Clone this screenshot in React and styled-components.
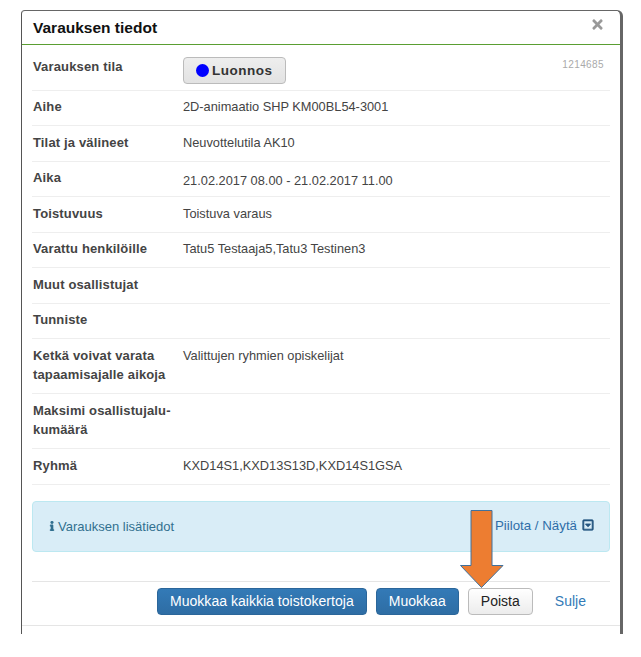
import React from 'react';
import styled, { createGlobalStyle } from 'styled-components';
import { FaInfo, FaTimes, FaRegCaretSquareDown } from 'react-icons/fa';

const GlobalStyle = createGlobalStyle`
  body {
    margin: 0;
    background: #fff;
    font-family: "Liberation Sans", Arial, sans-serif;
    font-size: 13px;
    color: #333;
  }
`;

const Page = styled.div`
  width: 641px;
  height: 657px;
  padding: 10px 0 0 21px;
  box-sizing: border-box;
`;

const Modal = styled.div`
  position: relative;
  width: 602px;
  height: 624px;
  box-sizing: border-box;
  border-top: 1px solid #666;
  border-left: 1px solid #555;
  border-right: 3px solid #666;
  border-radius: 4px 6px 0 0;
  display: flex;
  flex-direction: column;
`;

const Header = styled.div`
  height: 33px;
  flex: none;
  border-bottom: 1px solid #5a9e32;
  padding: 0 15px 0 11px;
  display: flex;
  justify-content: space-between;
  align-items: center;
`;

const Title = styled.h4`
  margin: 0;
  font-size: 15.5px;
  font-weight: bold;
  color: #111;
`;

const CloseButton = styled.span`
  color: #999;
  font-size: 15px;
  display: flex;
  margin: -6px 0 0;
`;

const Body = styled.div`
  padding: 0 10px;
  flex: none;
`;

const Row = styled.div`
  display: grid;
  grid-template-columns: 150px 1fr auto;
  box-sizing: border-box;
  height: ${({ $height }) => $height}px;
  padding: ${({ $top }) => $top || 6.6}px 6px 0 1px;
  border-bottom: 1px solid #eee;
  line-height: 19px;
`;

const Label = styled.div`
  font-weight: bold;
  font-size: 13px;
  letter-spacing: 0.15px;
  color: #444;
`;

const Value = styled.div`
  color: #444;
  font-size: 12.8px;
  padding-top: ${({ $shift }) => $shift || 0}px;
`;

const StatusButton = styled.div`
  width: 103px;
  height: 27px;
  box-sizing: border-box;
  border: 1px solid #bbb;
  border-radius: 4px;
  background: linear-gradient(#eee, #e2e2e2);
  display: flex;
  align-items: center;
  padding-left: 12px;
  gap: 3px;
  font-size: 13.5px;
  font-weight: bold;
  color: #333;
  letter-spacing: 0.5px;
`;

const Dot = styled.span`
  width: 13px;
  height: 13px;
  border-radius: 50%;
  background: #0000ff;
`;

const ReservationId = styled.div`
  font-size: 10px;
  color: #aaa;
  letter-spacing: 0.4px;
  margin-top: -2px;
`;

const InfoBox = styled.div`
  margin-top: 16.4px;
  height: 51px;
  box-sizing: border-box;
  background: #d9edf7;
  border: 1px solid #bce8f1;
  border-radius: 4px;
  padding: 0 15px;
  display: flex;
  justify-content: space-between;
  align-items: center;
  color: #31708f;
`;

const InfoText = styled.span`
  display: flex;
  align-items: center;
  svg {
    margin-left: -1px;
    stroke: currentColor;
    stroke-width: 20px;
  }
  span {
    margin-left: 1px;
  }
`;

const ToggleLink = styled.span`
  display: flex;
  align-items: center;
  gap: 5px;
  font-size: 13.3px;
  color: #2f6ea8;
  margin-top: -2px;
  svg {
    color: #245580;
    stroke: #245580;
    stroke-width: 30px;
  }
`;

const Footer = styled.div`
  margin: 29px 10px 0;
  height: 44px;
  box-sizing: border-box;
  border-top: 1px solid #e5e5e5;
  padding: 6px 12px 0 0;
  display: flex;
  justify-content: flex-end;
  gap: 9px;
`;

const Button = styled.div`
  height: 27px;
  box-sizing: border-box;
  padding: 0 12px;
  border-radius: 4px;
  border: 1px solid ${({ $primary }) => ($primary ? '#2b669a' : '#bbb')};
  background: ${({ $primary }) => ($primary
    ? 'linear-gradient(#337ab7, #2e6da4)'
    : 'linear-gradient(#fff, #ececec)')};
  color: ${({ $primary }) => ($primary ? '#fff' : '#222')};
  display: flex;
  align-items: center;
  font-size: 14px;
  letter-spacing: 0.03px;
`;

const LinkButton = styled.div`
  height: 27px;
  padding: 0 12px 0 13px;
  display: flex;
  align-items: center;
  font-size: 14px;
  color: #337ab7;
`;

const BottomLine = styled.div`
  border-top: 1px solid #e5e5e5;
`;

const Arrow = styled.svg`
  position: absolute;
  left: 438px;
  top: 498px;
`;

const rows = [
  { label: 'Aihe', value: '2D-animaatio SHP KM00BL54-3001', height: 35.5 },
  { label: 'Tilat ja välineet', value: 'Neuvottelutila AK10', height: 35.5 },
  { label: 'Aika', value: '21.02.2017 08.00 - 21.02.2017 11.00', height: 35.5, shift: 3 },
  { label: 'Toistuvuus', value: 'Toistuva varaus', height: 35.5 },
  { label: 'Varattu henkilöille', value: 'Tatu5 Testaaja5,Tatu3 Testinen3', height: 35.5 },
  { label: 'Muut osallistujat', height: 35.5 },
  { label: 'Tunniste', height: 35.5 },
  { label: 'Ketkä voivat varata tapaamisajalle aikoja', value: 'Valittujen ryhmien opiskelijat', height: 55 },
  { label: 'Maksimi osallistujalu-kumäärä', height: 55 },
  { label: 'Ryhmä', value: 'KXD14S1,KXD13S13D,KXD14S1GSA', height: 35.5 },
];

const App = () => (
  <Page>
    <GlobalStyle />
    <Modal>
      <Header>
        <Title>Varauksen tiedot</Title>
        <CloseButton><FaTimes /></CloseButton>
      </Header>
      <Body>
        <Row $height={45.6} $top={12}>
          <Label>Varauksen tila</Label>
          <StatusButton><Dot />Luonnos</StatusButton>
          <ReservationId>1214685</ReservationId>
        </Row>
        {rows.map(row => (
          <Row key={row.label} $height={row.height}>
            <Label>{row.label}</Label>
            <Value $shift={row.shift}>{row.value}</Value>
          </Row>
        ))}
        <InfoBox>
          <InfoText><FaInfo size={10} /><span>Varauksen lisätiedot</span></InfoText>
          <ToggleLink>Piilota / Näytä <FaRegCaretSquareDown size={12} /></ToggleLink>
        </InfoBox>
      </Body>
      <Footer>
        <Button $primary>Muokkaa kaikkia toistokertoja</Button>
        <Button $primary>Muokkaa</Button>
        <Button>Poista</Button>
        <LinkButton>Sulje</LinkButton>
      </Footer>
      <BottomLine />
      <Arrow width="44" height="80" viewBox="0 0 44 80">
        <path
          d="M11 1.5 H32 V56.5 H43 L21.5 78.5 L0.5 56.5 H11 Z"
          fill="#ed7d31"
          stroke="#41719c"
          strokeWidth="1"
        />
      </Arrow>
    </Modal>
  </Page>
);

export default App;
